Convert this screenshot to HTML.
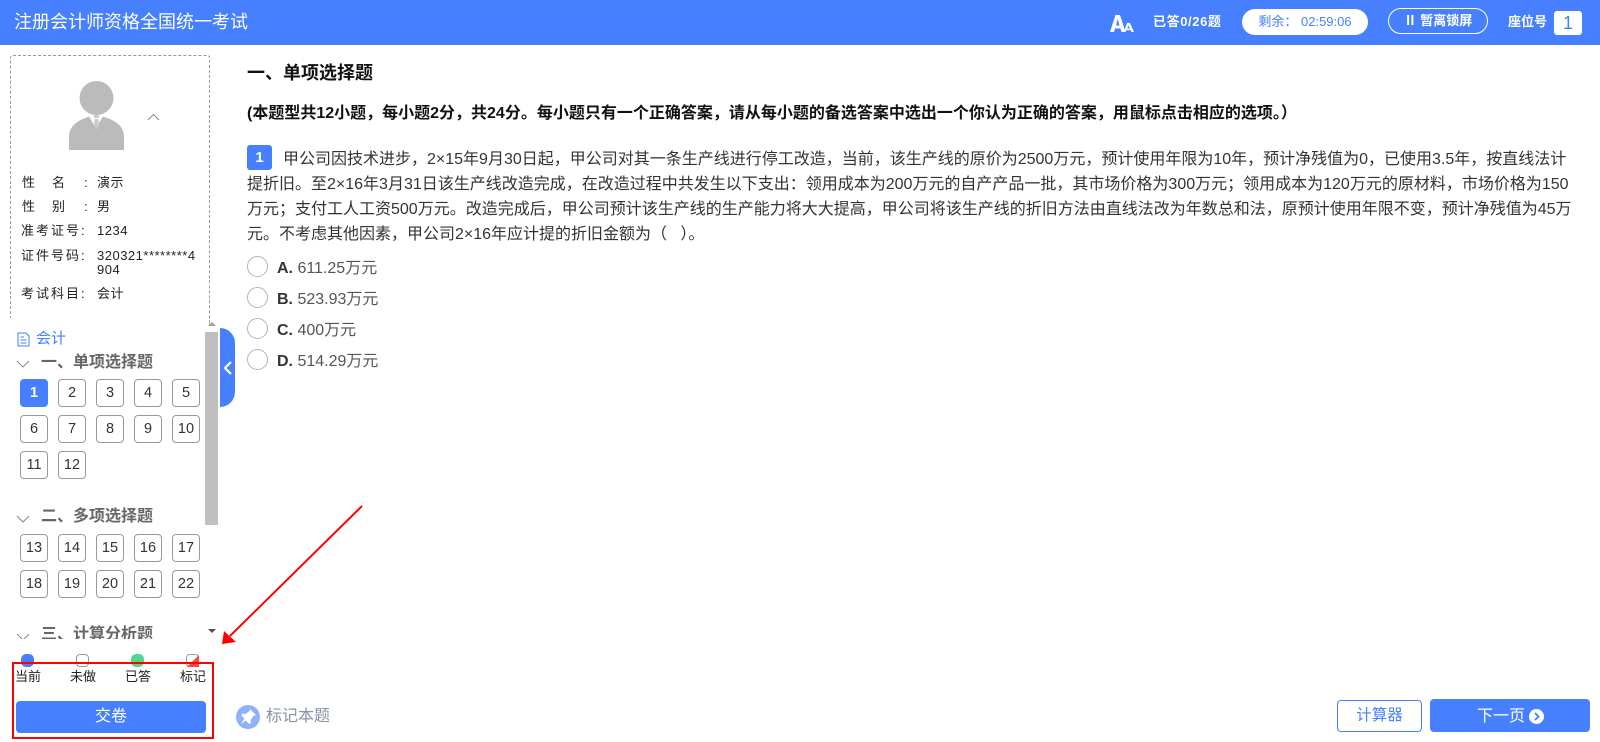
<!DOCTYPE html>
<html lang="zh">
<head>
<meta charset="utf-8">
<title>注册会计师资格全国统一考试</title>
<style>
*{box-sizing:border-box;margin:0;padding:0}
html,body{width:1600px;height:742px;overflow:hidden;background:#fff}
body{position:relative;font-family:"Liberation Sans","Noto Sans CJK SC",sans-serif;color:#222}
.a{position:absolute;white-space:nowrap}
#hd{left:0;top:0;width:1600px;height:45px;background:#4680ff}
.info{font-size:13px;line-height:16px;letter-spacing:.5px;color:#222}
.n{position:absolute;width:28px;height:28px;border:1px solid #999;border-radius:4px;font-size:14.500px;line-height:26px;text-align:center;color:#333;background:#fff}
.n.on{background:#4680ff;border-color:#4680ff;color:#fff;font-weight:bold}
.sec{font-size:16px;line-height:20px;color:#666;font-weight:bold;left:41px}
.chev{position:absolute;left:16px;width:14px;height:8px}
.opt{position:absolute;left:247px;width:21px;height:21px;border:1px solid #b5b5b5;border-radius:50%;background:#fff}
.ot{left:277px;font-size:16px;line-height:20px;color:#555}
.ot b{color:#333}
.q{left:247px;font-size:16px;line-height:25px;color:#333}
.lg{font-size:13px;line-height:16px;color:#222;top:669px}
</style>
</head>
<body>
<div class="a" id="hd"></div>
<div class="a" style="left:14px;top:10px;font-size:18px;line-height:24px;color:#fff">注册会计师资格全国统一考试</div>
<svg class="a" style="left:1110px;top:15px" width="24" height="18" viewBox="0 0 24 18"><path fill="#fff" d="M5.500 0h4.500l5.500 17h-4l-1-3.500H5L4 17H0zM7.800 4L6 10.500h3.500z"/><path fill="#fff" d="M17 8h3l4 9h-2.500l-.6-1.800h-4.800L15.500 17H14zM18.500 10.500l-1.300 3h2.600z"/></svg>
<div class="a" style="left:1153px;top:12px;font-size:13px;line-height:20px;letter-spacing:.6px;color:#fff;font-weight:bold">已答0/26题</div>
<div class="a" style="left:1242px;top:9px;width:126px;height:26px;background:#fff;border-radius:13px;font-size:13px;line-height:26px;color:#4680ff;text-align:center">剩余： 02:59:06</div>
<div class="a" style="left:1388px;top:8px;width:100px;height:26px;border:1px solid #fff;border-radius:13px;font-size:13px;line-height:24px;color:#fff;text-align:center;font-weight:bold">Ⅱ 暂离锁屏</div>
<div class="a" style="left:1508px;top:12px;font-size:13px;line-height:20px;color:#fff;font-weight:bold">座位号</div>
<div class="a" style="left:1554px;top:11px;width:28px;height:24px;background:#fff;border-radius:3px;font-size:18px;line-height:24px;text-align:center;color:#3d85f5">1</div>

<div class="a" style="left:10px;top:55px;width:200px;height:270px;border:1px dashed #999;border-bottom:0;border-radius:3px 3px 0 0"></div>
<svg class="a" style="left:68px;top:79px" width="58" height="72" viewBox="0 0 58 72"><circle cx="28.500" cy="19" r="17" fill="#bbb"/><path fill="#bbb" d="M1 71V58C1 46 11 41 21 37.500L28 49l7-11.500C46 41 56 46 56 58v13z"/><rect x="26" y="36" width="5" height="3" fill="#ccc"/><path fill="#ccc" d="M26.500 40h4l.5 6-2.500 5-2.500-5z"/></svg>
<svg class="a" style="left:147px;top:113px" width="13" height="8" viewBox="0 0 13 8"><path d="M1 7l5.500-5.500L12 7" fill="none" stroke="#888" stroke-width="1"/></svg>
<div class="a info" style="left:22px;top:175px">性</div><div class="a info" style="left:52px;top:175px">名</div><div class="a info" style="left:84px;top:175px">:</div><div class="a info" style="left:97px;top:175px">演示</div>
<div class="a info" style="left:22px;top:199px">性</div><div class="a info" style="left:52px;top:199px">别</div><div class="a info" style="left:84px;top:199px">:</div><div class="a info" style="left:97px;top:199px">男</div>
<div class="a info" style="left:21px;top:223px;letter-spacing:2px">准考证号:</div><div class="a info" style="left:97px;top:223px">1234</div>
<div class="a info" style="left:21px;top:248px;letter-spacing:2px">证件号码:</div><div class="a info" style="left:97px;top:249px;line-height:14px">320321********4<br>904</div>
<div class="a info" style="left:21px;top:286px;letter-spacing:2px">考试科目:</div><div class="a info" style="left:97px;top:286px">会计</div>

<div class="a" style="left:0;top:318px;width:204px;height:10px;background:#fff"></div>
<svg class="a" style="left:17px;top:332px" width="13" height="15" viewBox="0 0 13 15"><path d="M1 1h8l3 3v10H1zM3.500 5H7M3.500 8h6M3.500 11h6" fill="none" stroke="#4680ff"/></svg>
<div class="a" style="left:36px;top:328px;font-size:15px;line-height:22px;color:#4680ff">会计</div>

<svg class="chev" style="top:360px" viewBox="0 0 14 8"><path d="M1 1l6 6 6-6" fill="none" stroke="#888"/></svg>
<div class="a sec" style="top:353px">一、单项选择题</div>
<div class="n on" style="left:20px;top:379px">1</div><div class="n" style="left:58px;top:379px">2</div><div class="n" style="left:96px;top:379px">3</div><div class="n" style="left:134px;top:379px">4</div><div class="n" style="left:172px;top:379px">5</div>
<div class="n" style="left:20px;top:415px">6</div><div class="n" style="left:58px;top:415px">7</div><div class="n" style="left:96px;top:415px">8</div><div class="n" style="left:134px;top:415px">9</div><div class="n" style="left:172px;top:415px">10</div>
<div class="n" style="left:20px;top:451px">11</div><div class="n" style="left:58px;top:451px">12</div>

<svg class="chev" style="top:515px" viewBox="0 0 14 8"><path d="M1 1l6 6 6-6" fill="none" stroke="#888"/></svg>
<div class="a sec" style="top:507px">二、多项选择题</div>
<div class="n" style="left:20px;top:534px">13</div><div class="n" style="left:58px;top:534px">14</div><div class="n" style="left:96px;top:534px">15</div><div class="n" style="left:134px;top:534px">16</div><div class="n" style="left:172px;top:534px">17</div>
<div class="n" style="left:20px;top:570px">18</div><div class="n" style="left:58px;top:570px">19</div><div class="n" style="left:96px;top:570px">20</div><div class="n" style="left:134px;top:570px">21</div><div class="n" style="left:172px;top:570px">22</div>

<svg class="chev" style="top:633px" viewBox="0 0 14 8"><path d="M1 1l6 6 6-6" fill="none" stroke="#888"/></svg>
<div class="a sec" style="top:625px">三、计算分析题</div>
<div class="a" style="left:0;top:639px;width:218px;height:15px;background:#fff"></div>

<div class="a" style="left:205px;top:332px;width:13px;height:193px;background:#bfbfbf"></div>
<div class="a" style="left:208px;top:322px;width:0;height:0;border:4px solid transparent;border-top:0;border-bottom:4px solid #a0a0a0"></div>
<div class="a" style="left:208px;top:629px;width:0;height:0;border:4px solid transparent;border-bottom:0;border-top:4px solid #505050"></div>
<div class="a" style="left:220px;top:328px;width:15px;height:79px;background:#4680ff;border-radius:0 15px 15px 0"></div>
<svg class="a" style="left:222px;top:360px" width="12" height="16" viewBox="0 0 12 16"><path d="M9 2L3 8l6 6" fill="none" stroke="#fff" stroke-width="2.200"/></svg>

<div class="a" style="left:21px;top:654px;width:13px;height:13px;border-radius:5px;background:#4680ff"></div>
<div class="a" style="left:76px;top:654px;width:13px;height:13px;border:1px solid #999;border-radius:4px"></div>
<div class="a" style="left:131px;top:654px;width:13px;height:13px;border-radius:5px;background:#50d890"></div>
<svg class="a" style="left:186px;top:654px" width="13" height="13" viewBox="0 0 13 13"><rect x=".5" y=".5" width="12" height="12" rx="3" fill="#fff" stroke="#999"/><path d="M13 1v12H1z" fill="#f44"/></svg>
<div class="a lg" style="left:15px">当前</div><div class="a lg" style="left:70px">未做</div><div class="a lg" style="left:125px">已答</div><div class="a lg" style="left:180px">标记</div>
<div class="a" style="left:16px;top:701px;width:190px;height:32px;background:#4680ff;border-radius:4px;color:#fff;font-size:16px;line-height:32px;text-align:center">交卷</div>
<div class="a" style="left:12px;top:662px;width:202px;height:77px;border:2px solid #f00"></div>
<svg class="a" style="left:215px;top:500px" width="155" height="155" viewBox="0 0 155 155"><path d="M147 6L15 136" stroke="#f00" stroke-width="2" fill="none"/><path d="M7 144l2-13 12 11z" fill="#f00"/></svg>

<div class="a" style="left:247px;top:61px;font-size:18px;line-height:24px;font-weight:bold;color:#111">一、单项选择题</div>
<div class="a" style="left:247px;top:103px;font-size:16px;line-height:22px;font-weight:bold;color:#111">(本题型共12小题，每小题2分，共24分。每小题只有一个正确答案，请从每小题的备选答案中选出一个你认为正确的答案，用鼠标点击相应的选项。）</div>
<div class="a" style="left:247px;top:145px;width:25px;height:25px;background:#4680ff;border-radius:3px;color:#fff;font-weight:bold;font-size:15px;line-height:25px;text-align:center">1</div>
<div class="a q" style="top:147px;left:283px">甲公司因技术进步，2×15年9月30日起，甲公司对其一条生产线进行停工改造，当前，该生产线的原价为2500万元，预计使用年限为10年，预计净残值为0，已使用3.5年，按直线法计</div>
<div class="a q" style="top:172px">提折旧。至2×16年3月31日该生产线改造完成，在改造过程中共发生以下支出：领用成本为200万元的自产产品一批，其市场价格为300万元；领用成本为120万元的原材料，市场价格为150</div>
<div class="a q" style="top:197px">万元；支付工人工资500万元。改造完成后，甲公司预计该生产线的生产能力将大大提高，甲公司将该生产线的折旧方法由直线法改为年数总和法，原预计使用年限不变，预计净残值为45万</div>
<div class="a q" style="top:222px">元。不考虑其他因素，甲公司2×16年应计提的折旧金额为（&nbsp;&nbsp;&nbsp;）。</div>

<div class="opt" style="top:256px"></div><div class="a ot" style="top:259px"><b>A.</b> 611.25万元</div>
<div class="opt" style="top:287px"></div><div class="a ot" style="top:290px"><b>B.</b> 523.93万元</div>
<div class="opt" style="top:318px"></div><div class="a ot" style="top:321px"><b>C.</b> 400万元</div>
<div class="opt" style="top:349px"></div><div class="a ot" style="top:352px"><b>D.</b> 514.29万元</div>

<svg class="a" style="left:236px;top:705px" width="24" height="24" viewBox="0 0 24 24"><circle cx="12" cy="12" r="12" fill="#8fb0fb"/><path fill="#fff" d="M14 4l6 6-2.500 1-3 4 .5 3-2 1-3-3.500L5 19l3.500-5.500L5.500 10.500l1-2 3 .5 4-3z"/></svg>
<div class="a" style="left:266px;top:706px;font-size:16px;line-height:22px;color:#8a91a8">标记本题</div>
<div class="a" style="left:1337px;top:700px;width:85px;height:32px;border:1px solid #4680ff;border-radius:4px;background:#fff;color:#4680ff;font-size:15.500px;line-height:30px;text-align:center">计算器</div>
<div class="a" style="left:1430px;top:699px;width:160px;height:33px;background:#4680ff;border-radius:4px;color:#fff;font-size:16px;line-height:33px"><span style="position:absolute;left:47px;top:1px">下一页</span><svg style="position:absolute;left:99px;top:10px" width="15" height="15" viewBox="0 0 15 15"><circle cx="7.500" cy="7.500" r="7.500" fill="#fff"/><path d="M6 4l3.500 3.500L6 11" fill="none" stroke="#4680ff" stroke-width="1.800"/></svg></div>
</body>
</html>
